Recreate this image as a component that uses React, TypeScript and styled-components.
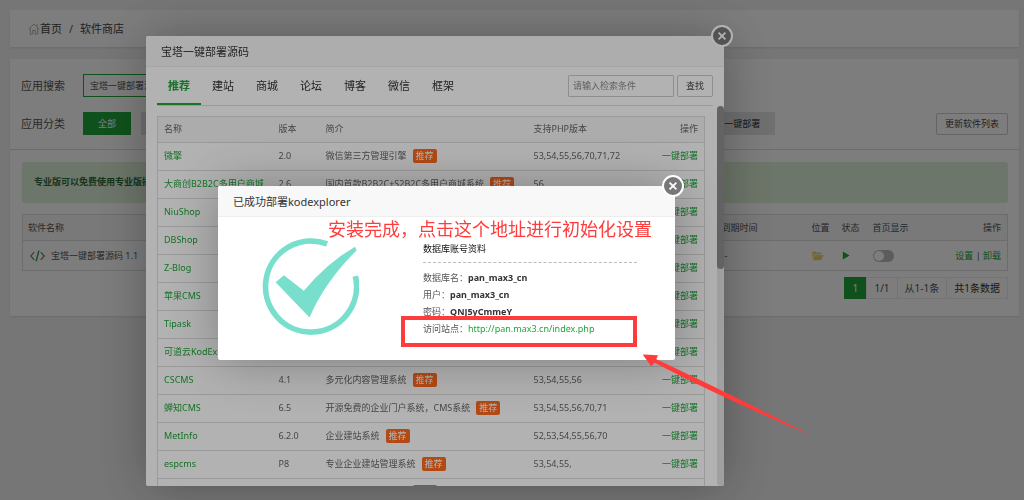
import React from "react";
import styled, { createGlobalStyle, css } from "styled-components";

const GREEN = "#20a53a";

const GlobalStyle = createGlobalStyle`
  *, *::before, *::after { box-sizing: border-box; }
  body {
    margin: 0;
    min-height: 100vh;
    overflow: hidden;
    background: #f1f1f1;
    color: #555;
    font: 9px/16px "Noto Sans", "Noto Sans CJK SC", sans-serif;
  }
  button, input { font: inherit; color: inherit; margin: 0; }
  a { color: ${GREEN}; text-decoration: none; }
  table { width: 100%; border-collapse: collapse; table-layout: fixed; }
  th { font-weight: 400; text-align: left; }
  h1, h2, p, dl, dd { margin: 0; font-weight: 400; }
`;

/* ---------- store page ---------- */

const Page = styled.main`
  display: flex;
  flex-direction: column;
  gap: 12px;
  padding: 10px 5px 10px 10px;
  white-space: nowrap;
`;

const Panel = styled.section`
  background: #fff;
  box-shadow: 0 1px 2px rgba(0, 0, 0, 0.1);
`;

const Breadcrumb = styled.nav`
  display: flex;
  align-items: center;
  gap: 7px;
  height: 37px;
  padding-left: 18px;
  background: #fff;
  box-shadow: 0 1px 2px rgba(0, 0, 0, 0.1);
  font-size: 11px;
  a {
    display: flex;
    align-items: center;
    color: #444;
  }
`;

const Filters = styled.div`
  display: flex;
  flex-direction: column;
  gap: 15px;
  padding: 15px 11px 14px;
  border-bottom: 1px solid #ddd;
`;

const FilterRow = styled.div`
  display: flex;
  align-items: center;
  height: 23px;
`;

const FilterLabel = styled.label`
  width: 62px;
  font-size: 11px;
`;

const SearchBox = styled.input`
  width: 180px;
  height: 23px;
  padding: 0 6px;
  border: 1px solid ${GREEN};
  background: #fff;
  outline: none;
`;

const Categories = styled.div`
  display: flex;
  gap: 10px;
`;

const Category = styled.button<{ $active?: boolean }>`
  height: 23px;
  padding: 0 15px;
  border: 0;
  background: ${(p) => (p.$active ? GREEN : "#e4e4e4")};
  color: ${(p) => (p.$active ? "#fff" : "#333")};
`;

const OutlineButton = styled.button`
  height: 22px;
  padding: 0 8px;
  border: 1px solid #ccc;
  border-radius: 2px;
  background: transparent;
  color: #444;
`;

const RefreshButton = styled(OutlineButton)`
  margin-left: auto;
`;

const Content = styled.div`
  padding: 12px 11px 17px 12px;
`;

const Notice = styled.p`
  height: 41px;
  margin-bottom: 11px;
  padding: 12px;
  border-radius: 3px;
  background: #dff0d8;
  color: #2c6a38;
  font-weight: 700;
`;

const SoftTable = styled.table`
  border: 1px solid #ddd;
  th, td {
    height: 30px;
    padding: 0 6px 0 5px;
    border-bottom: 1px solid #ddd;
  }
  th { height: 26px; background: #f6f6f6; }
  th:last-child, td:last-child { text-align: right; }
  svg { display: block; }
`;

const SoftName = styled.span`
  display: flex;
  align-items: center;
  gap: 6px;
  padding-left: 2px;
`;

const Toggle = styled.input`
  appearance: none;
  display: block;
  width: 21px;
  height: 12px;
  margin: 0;
  padding: 1px;
  border-radius: 6px;
  background: #bbb;
  &::before {
    content: "";
    display: block;
    width: 10px;
    height: 10px;
    border-radius: 50%;
    background: #fff;
  }
`;

const Pager = styled.div`
  display: flex;
  width: max-content;
  height: 22px;
  margin: 6px 0 0 auto;
  border: 1px solid #ececec;
  font-size: 10px;
  line-height: 20px;
  text-align: center;
  span { padding: 0 7px; border-left: 1px solid #ececec; }
  span:first-child {
    min-width: 22px;
    margin: -1px 0 -1px -1px;
    border: 0;
    background: ${GREEN};
    color: #fff;
    line-height: 22px;
  }
  span:last-child { color: #333; }
`;

/* ---------- dialogs ---------- */

const Overlay = styled.div<{ $right: number; $top: number }>`
  position: fixed;
  inset: 0;
  display: flex;
  align-items: center;
  justify-content: center;
  padding: ${(p) => `${p.$top}px ${p.$right}px 0 0`};
  background: rgba(0, 0, 0, 0.3);
`;

const Dialog = styled.section<{ $width: number }>`
  position: relative;
  display: flex;
  flex-direction: column;
  width: ${(p) => p.$width}px;
  border-radius: 2px;
  background: #fff;
  box-shadow: 1px 1px 50px rgba(0, 0, 0, 0.3);
`;

const StoreDialog = styled(Dialog)`
  height: 90vh;
`;

const DialogTitle = styled.h2`
  flex: none;
  height: 31px;
  padding-left: 15px;
  border-bottom: 1px solid #eee;
  border-radius: 2px 2px 0 0;
  background: #f8f8f8;
  color: #333;
  font-size: 11px;
  line-height: 31px;
`;

const CloseButton = styled.button`
  position: absolute;
  top: -11px;
  right: -9px;
  display: grid;
  place-items: center;
  width: 22px;
  height: 22px;
  padding: 0;
  border: 2px solid #fff;
  border-radius: 50%;
  background: #777;
  color: #fff;
`;

const TabBar = styled.div`
  display: flex;
  align-items: center;
  height: 39px;
  margin: 0 11px;
  border-bottom: 1px solid #ddd;
`;

const Tab = styled.button<{ $active?: boolean }>`
  width: 44px;
  height: 39px;
  padding: 2px 0 0;
  border: 0;
  border-bottom: 2px solid transparent;
  background: none;
  color: #333;
  font-size: 11px;
  ${(p) =>
    p.$active &&
    css`
      border-color: ${GREEN};
      color: ${GREEN};
      font-weight: 700;
    `}
`;

const DialogSearch = styled.form`
  display: flex;
  gap: 3px;
  margin-left: auto;
  input {
    width: 106px;
    height: 22px;
    padding: 0 4px;
    border: 1px solid #ccc;
    border-radius: 1px;
    background: transparent;
  }
  input::placeholder { color: #888; }
`;

const ScrollArea = styled.div`
  display: flex;
  flex: 1;
  min-height: 0;
  overflow: hidden;
  padding-left: 11px;
`;

const TableHolder = styled.div`
  flex: 1;
  padding: 10px 12px 0 0;
`;

const ScrollTrack = styled.div`
  width: 7px;
  border-radius: 4px;
  background: #e6e6e6;
  &::before {
    content: "";
    display: block;
    height: 163px;
    border-radius: 4px;
    background: #8f8f8f;
  }
`;

const AppTable = styled.table`
  border: 1px solid #ddd;
  white-space: nowrap;
  th, td {
    height: 28px;
    padding: 0 6px;
    border-bottom: 1px solid #ddd;
    color: #666;
  }
  th { height: 26px; background: #f6f6f6; }
  th:last-child, td:last-child { text-align: right; }
`;

const Badge = styled.span`
  display: inline-block;
  margin-left: 6px;
  padding: 0 3px;
  border-radius: 2px;
  background: #ff6a1f;
  color: #fff;
  line-height: 14px;
`;

const ResultBody = styled.div`
  display: flex;
  align-items: flex-start;
  height: 143px;
  padding: 20px 38px 0 44px;
`;

const Details = styled.div`
  flex: 1;
  margin-left: 64px;
  padding-top: 3px;
  color: #555;
  line-height: 17px;
  h3 {
    margin: 0 0 6px;
    padding-bottom: 5px;
    border-bottom: 1px dashed #bbb;
    color: #111;
    font-size: 9px;
    font-weight: 400;
  }
  dl > div { display: flex; }
  dd { color: #333; font-weight: 700; }
  dd a { font-weight: 400; }
`;

/* ---------- hand-drawn marks above the dialog ---------- */

const Note = styled.p`
  position: absolute;
  top: 30px;
  left: 110px;
  color: #ff3b3b;
  font-size: 18px;
  line-height: 26px;
  white-space: nowrap;
`;

const Highlight = styled.div`
  position: absolute;
  top: 130px;
  left: 183px;
  width: 236px;
  height: 31px;
  border: 4px solid #ff3b3b;
`;

const Arrow = styled.svg`
  position: absolute;
  top: 168px;
  left: 424px;
`;

const CloseIcon = () => (
  <svg width="10" height="10" viewBox="0 0 10 10" stroke="currentColor" strokeWidth="1.8" aria-hidden="true">
    <path d="M1.6 1.6l6.8 6.8M8.4 1.6l-6.8 6.8" />
  </svg>
);

const HomeIcon = () => (
  <svg width="12" height="12" viewBox="0 0 12 12" fill="none" stroke="#aaa" strokeWidth="0.9" aria-hidden="true">
    <path d="M.6 6.4L6 .9l5.4 5.5M2.3 5.2v5.9h2.5V7.4h2.4v3.7h2.5V5.2M9.2 1.3v2.2" />
  </svg>
);

const CodeIcon = () => (
  <svg width="15" height="12" viewBox="0 0 15 12" fill="none" strokeWidth="1.2" aria-hidden="true">
    <path d="M4.2 2.2L.8 6l3.4 3.8M10.8 2.2L14.2 6l-3.4 3.8" stroke="#777" />
    <path d="M8.9.6L6.1 11.4" stroke={GREEN} strokeWidth="1.4" />
  </svg>
);

const FolderIcon = () => (
  <svg width="12" height="10" viewBox="0 0 12 10" aria-hidden="true">
    <path d="M.3 8V1.4Q.3.5 1.2.5h2.3q.8 0 .8.9h4.2q.9 0 .9.9v1H3.2q-.8 0-1.2.7z" fill="#ecd06a" />
    <path d="M3.3 4h8.4L9.6 8.6q-.3.6-1 .6H.7L2.5 4.6q.2-.6.8-.6z" fill="#ecd06a" />
  </svg>
);

const PlayIcon = () => (
  <svg width="8" height="9" viewBox="0 0 8 9" aria-hidden="true">
    <path d="M.8.4L7.6 4.5.8 8.6z" fill={GREEN} />
  </svg>
);

const SuccessIcon = () => (
  <svg width="97" height="98" viewBox="186 203 292 293" role="img" aria-label="成功">
    <path d="M382 223A137 137 0 1 0 467 320" fill="none" stroke="#79dfcd" strokeWidth="17" />
    <path d="M227 338L252 317L312 364Q381 280 466 231L471 242Q376 336 329 444Z" fill="#79dfcd" />
  </svg>
);

type AppRow = { name: string; version?: string; intro?: string; hot?: boolean; php?: string };

const apps: AppRow[] = [
  { name: "微擎", version: "2.0", intro: "微信第三方管理引擎", hot: true, php: "53,54,55,56,70,71,72" },
  { name: "大商创B2B2C多用户商城", version: "2.6", intro: "国内首款B2B2C+S2B2C多用户商城系统", hot: true, php: "56" },
  { name: "NiuShop" },
  { name: "DBShop" },
  { name: "Z-Blog" },
  { name: "苹果CMS" },
  { name: "Tipask" },
  { name: "可道云KodExplorer" },
  { name: "CSCMS", version: "4.1", intro: "多元化内容管理系统", hot: true, php: "53,54,55,56" },
  { name: "蝉知CMS", version: "6.5", intro: "开源免费的企业门户系统，CMS系统", hot: true, php: "53,54,55,56,70,71" },
  { name: "MetInfo", version: "6.2.0", intro: "企业建站系统", hot: true, php: "52,53,54,55,56,70" },
  { name: "espcms", version: "P8", intro: "专业企业建站管理系统", hot: true, php: "53,54,55," },
  { name: "帝国CMS", version: "7.5", intro: "开源网站内容管理系", hot: true, php: "53,54,55" },
];

const categories = ["全部", "已安装", "运行环境", "系统工具", "宝塔插件", "专业版插件", "企业版插件", "第三方应用", "宝塔一键部署"];
const tabs = ["推荐", "建站", "商城", "论坛", "博客", "微信", "框架"];

function StorePage() {
  return (
    <Page>
      <Breadcrumb>
        <a href="#home"><HomeIcon />首页</a>
        <span>/</span>
        <a href="#store">软件商店</a>
      </Breadcrumb>
      <Panel>
        <Filters>
          <FilterRow>
            <FilterLabel htmlFor="soft-search">应用搜索</FilterLabel>
            <SearchBox id="soft-search" defaultValue="宝塔一键部署源码" />
          </FilterRow>
          <FilterRow>
            <FilterLabel as="span">应用分类</FilterLabel>
            <Categories>
              {categories.map((c, i) => (
                <Category key={c} $active={i === 0}>{c}</Category>
              ))}
            </Categories>
            <RefreshButton>更新软件列表</RefreshButton>
          </FilterRow>
        </Filters>
        <Content>
          <Notice>专业版可以免费使用专业版插件</Notice>
          <SoftTable>
            <colgroup>
              <col />
              <col width="90" />
              <col width="30" />
              <col width="31" />
              <col width="70" />
              <col width="70" />
            </colgroup>
            <thead>
              <tr>
                <th>软件名称</th><th>到期时间</th><th>位置</th><th>状态</th><th>首页显示</th><th>操作</th>
              </tr>
            </thead>
            <tbody>
              <tr>
                <td><SoftName><CodeIcon />宝塔一键部署源码 1.1</SoftName></td>
                <td>--</td>
                <td><FolderIcon /></td>
                <td><PlayIcon /></td>
                <td><Toggle type="checkbox" aria-label="首页显示" /></td>
                <td><a href="#set">设置</a> | <a href="#remove">卸载</a></td>
              </tr>
            </tbody>
          </SoftTable>
          <Pager>
            <span>1</span><span>1/1</span><span>从1-1条</span><span>共1条数据</span>
          </Pager>
        </Content>
      </Panel>
    </Page>
  );
}

function DeployDialog() {
  return (
    <StoreDialog $width={578} role="dialog" aria-label="宝塔一键部署源码">
      <DialogTitle>宝塔一键部署源码</DialogTitle>
      <TabBar>
        {tabs.map((t, i) => (
          <Tab key={t} $active={i === 0}>{t}</Tab>
        ))}
        <DialogSearch>
          <input aria-label="检索条件" placeholder="请输入检索条件" />
          <OutlineButton type="button">查找</OutlineButton>
        </DialogSearch>
      </TabBar>
      <ScrollArea>
        <TableHolder>
          <AppTable>
            <colgroup>
              <col width="115" />
              <col width="47" />
              <col width="208" />
              <col />
              <col width="60" />
            </colgroup>
            <thead>
              <tr>
                <th>名称</th><th>版本</th><th>简介</th><th>支持PHP版本</th><th>操作</th>
              </tr>
            </thead>
            <tbody>
              {apps.map((app) => (
                <tr key={app.name}>
                  <td><a href="#app">{app.name}</a></td>
                  <td>{app.version}</td>
                  <td>{app.intro}{app.hot && <Badge>推荐</Badge>}</td>
                  <td>{app.php}</td>
                  <td><a href="#deploy">一键部署</a></td>
                </tr>
              ))}
            </tbody>
          </AppTable>
        </TableHolder>
        <ScrollTrack />
      </ScrollArea>
      <CloseButton aria-label="关闭"><CloseIcon /></CloseButton>
    </StoreDialog>
  );
}

function ResultDialog() {
  return (
    <Dialog $width={457} role="dialog" aria-label="已成功部署kodexplorer">
      <DialogTitle>已成功部署kodexplorer</DialogTitle>
      <ResultBody>
        <SuccessIcon />
        <Details>
          <h3>数据库账号资料</h3>
          <dl>
            <div><dt>数据库名：</dt><dd>pan_max3_cn</dd></div>
            <div><dt>用户：</dt><dd>pan_max3_cn</dd></div>
            <div><dt>密码：</dt><dd>QNJ5yCmmeY</dd></div>
            <div><dt>访问站点：</dt><dd><a href="http://pan.max3.cn/index.php">http://pan.max3.cn/index.php</a></dd></div>
          </dl>
        </Details>
      </ResultBody>
      <CloseButton aria-label="关闭"><CloseIcon /></CloseButton>
      <Note>安装完成，点击这个地址进行初始化设置</Note>
      <Highlight />
      <Arrow width="169" height="82" viewBox="636 72 508 245" aria-hidden="true">
        <path d="M638 73L684 75L679 87Q900 190 1142 315Q880 205 673 97L664 109Z" fill="#ff3b3b" />
      </Arrow>
    </Dialog>
  );
}

export default function App() {
  return (
    <>
      <GlobalStyle />
      <StorePage />
      <Overlay $right={154} $top={21}>
        <DeployDialog />
      </Overlay>
      <Overlay $right={131} $top={46}>
        <ResultDialog />
      </Overlay>
    </>
  );
}
